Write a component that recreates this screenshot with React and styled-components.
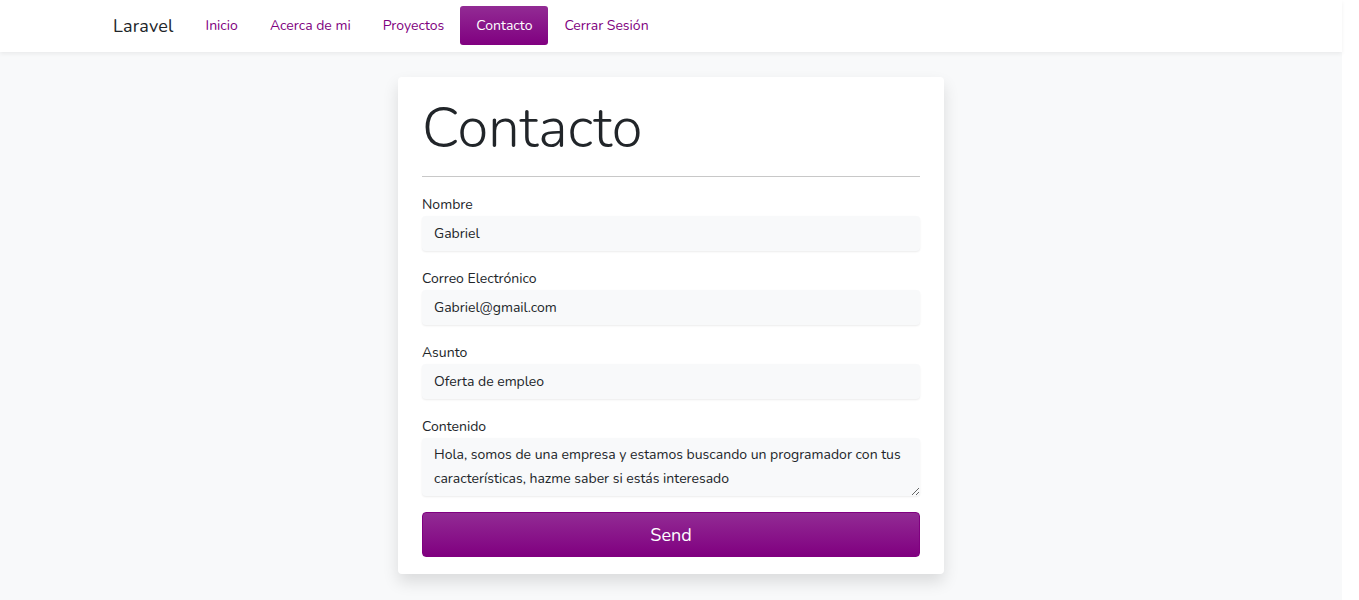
import React from 'react'
import styled, { createGlobalStyle } from 'styled-components';

const GlobalStyle = createGlobalStyle`
html, body {
  margin:0;
  padding:0;
  background:#fff;
}
body {
  font-family:"Nunito","Lato","Open Sans",sans-serif;
  font-size:14px;
  color:#212529;
}
* { box-sizing:border-box; }
`;

const links = ["Inicio","Acerca de mi","Proyectos","Contacto","Cerrar Sesión"];

function App() {
  return (
    <>
      <GlobalStyle />
      <Page>
        <Navbar>
          <NavInner>
            <Brand>Laravel</Brand>
            {links.map((l) => (
              <NavLink key={l} active={l === "Contacto"}>{l}</NavLink>
            ))}
          </NavInner>
        </Navbar>
        <Main>
          <Card>
            <Title>Contacto</Title>
            <Divider />
            <Form>
              <Field>
                <Label>Nombre</Label>
                <Input defaultValue="Gabriel" />
              </Field>
              <Field>
                <Label>Correo Electrónico</Label>
                <Input defaultValue="Gabriel@gmail.com" />
              </Field>
              <Field>
                <Label>Asunto</Label>
                <Input defaultValue="Oferta de empleo" />
              </Field>
              <Field last>
                <Label>Contenido</Label>
                <TextArea
                  rows={2}
                  defaultValue="Hola, somos de una empresa y estamos buscando un programador con tus características, hazme saber si estás interesado"
                />
              </Field>
              <SendButton type="button">Send</SendButton>
            </Form>
          </Card>
        </Main>
      </Page>
    </>
  );
}

export default App

const Page = styled.div`
width:1342px;
min-height:600px;
background:#f8f9fa;
`;

const Navbar = styled.nav`
background:#fff;
height:52px;
box-shadow:0 2px 4px rgba(0,0,0,0.06);
position:relative;
`;

const NavInner = styled.div`
width:1140px;
margin:0 auto;
padding:0 13px 1px 12px;
height:52px;
display:flex;
align-items:center;
`;

const Brand = styled.span`
font-size:18px;
color:#212529;
margin-right:16px;
letter-spacing:0.2px;
`;

const NavLink = styled.a`
display:flex;
align-items:center;
height:39px;
padding:0 16px;
border-radius:3px;
font-size:14px;
color:${p => p.active ? "#fff" : "#800080"};
background:${p => p.active ? "linear-gradient(180deg,#922b94 0%,#800080 100%)" : "transparent"};
cursor:pointer;
`;

const Main = styled.main`
display:flex;
justify-content:center;
padding:25px 0 26px;
`;

const Card = styled.div`
width:546px;
background:#fff;
border-radius:4px;
box-shadow:0 8px 16px rgba(0,0,0,0.12);
padding:18px 24px 17px;
`;

const Title = styled.h1`
font-size:56px;
font-weight:300;
line-height:1.2;
margin:0 0 14px;
color:#212529;
`;

const Divider = styled.hr`
border:0;
border-top:1px solid #c8c8c8;
margin:0 0 18px;
`;

const Form = styled.form`
display:flex;
flex-direction:column;
`;

const Field = styled.div`
display:flex;
flex-direction:column;
margin-bottom:${p => p.last ? "16px" : "18px"};
`;

const Label = styled.label`
font-size:14px;
line-height:20px;
margin-bottom:1px;
`;

const Input = styled.input`
height:35px;
border:0;
border-radius:4px;
background:#f8f9fa;
box-shadow:0 1px 2px rgba(0,0,0,0.08);
padding:0 12px;
font-family:inherit;
font-size:14px;
color:#212529;
outline:none;
`;

const TextArea = styled.textarea`
height:58px;
border:0;
border-radius:4px;
background:#f8f9fa;
box-shadow:0 1px 2px rgba(0,0,0,0.08);
padding:5px 10px 5px 12px;
font-family:inherit;
font-size:14px;
line-height:24px;
color:#212529;
outline:none;
resize:vertical;
`;

const SendButton = styled.button`
height:45px;
border:1px solid #800080;
border-radius:4px;
background:linear-gradient(180deg,#922b94 0%,#800080 100%);
color:#fff;
font-family:inherit;
font-size:18px;
cursor:pointer;
`;
